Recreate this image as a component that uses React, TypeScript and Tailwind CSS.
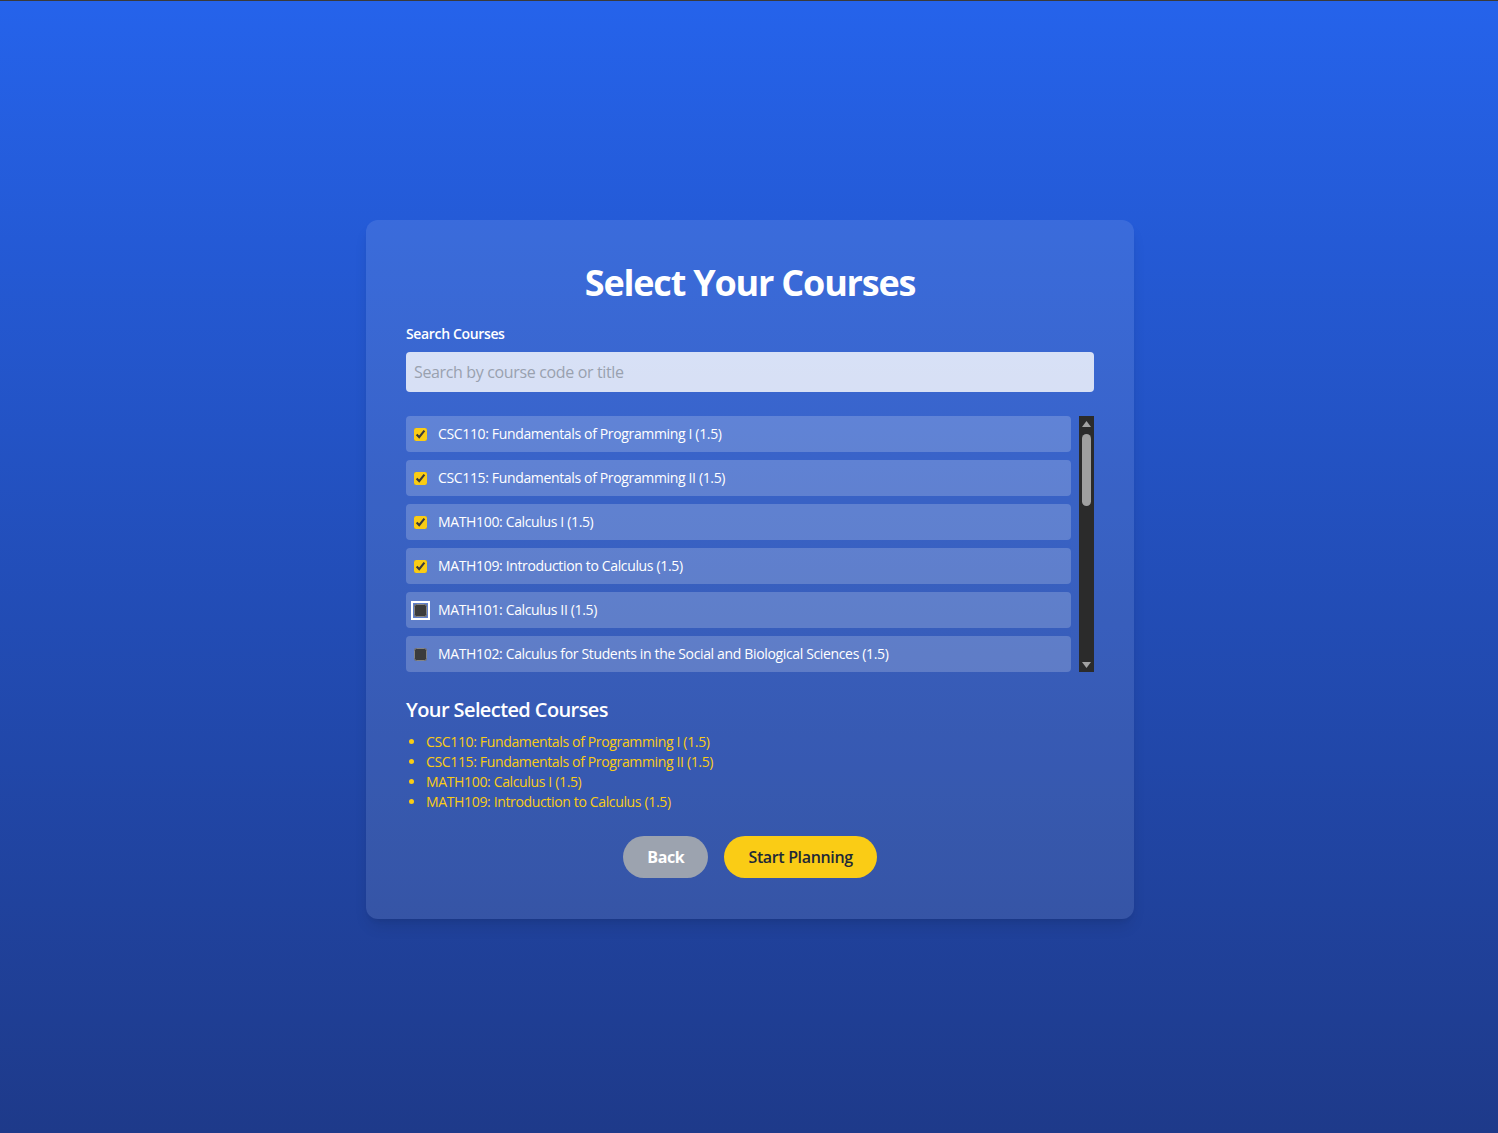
import React, { useState } from "react";

const COURSES = [
  { code: "CSC110", title: "Fundamentals of Programming I", units: "1.5" },
  { code: "CSC115", title: "Fundamentals of Programming II", units: "1.5" },
  { code: "MATH100", title: "Calculus I", units: "1.5" },
  { code: "MATH109", title: "Introduction to Calculus", units: "1.5" },
  { code: "MATH101", title: "Calculus II", units: "1.5" },
  { code: "MATH102", title: "Calculus for Students in the Social and Biological Sciences", units: "1.5" },
  { code: "MATH110", title: "Matrix Algebra for Engineers", units: "1.5" },
  { code: "MATH122", title: "Logic and Fundamentals", units: "1.5" },
  { code: "MATH200", title: "Calculus of Several Variables", units: "1.5" },
  { code: "MATH211", title: "Matrix Algebra I", units: "1.5" },
  { code: "CSC225", title: "Algorithms and Data Structures I", units: "1.5" },
  { code: "CSC226", title: "Algorithms and Data Structures II", units: "1.5" },
  { code: "CSC230", title: "Introduction to Computer Architecture", units: "1.5" },
  { code: "CSC320", title: "Foundations of Computer Science", units: "1.5" },
  { code: "CSC360", title: "Operating Systems", units: "1.5" },
  { code: "CSC370", title: "Database Systems", units: "1.5" },
  { code: "SENG265", title: "Software Development Methods", units: "1.5" },
  { code: "STAT260", title: "Introduction to Probability and Statistics I", units: "1.5" },
  { code: "ENGL135", title: "Academic Reading and Writing", units: "1.5" },
  { code: "PHYS110", title: "Introductory Physics I", units: "1.5" },
];

const label = (c: { code: string; title: string; units: string }) =>
  `${c.code}: ${c.title} (${c.units})`;

function Scrollbar() {
  return (
    <div className="w-[15px] shrink-0 bg-[#2b2b2b] flex flex-col items-center">
      <div className="h-[15px] w-full flex items-center justify-center">
        <svg width="9" height="6" viewBox="0 0 9 6">
          <polygon points="4.5,0 9,6 0,6" fill="#a3a3a3" />
        </svg>
      </div>
      <div className="mt-[3px] h-[72px] w-[9px] rounded-full bg-[#a0a0a0]" />
      <div className="flex-1" />
      <div className="h-[15px] w-full flex items-center justify-center">
        <svg width="9" height="6" viewBox="0 0 9 6">
          <polygon points="0,0 9,0 4.5,6" fill="#a3a3a3" />
        </svg>
      </div>
    </div>
  );
}

export default function App() {
  const [selected, setSelected] = useState<string[]>(["CSC110", "CSC115", "MATH100", "MATH109"]);
  const toggle = (code: string) =>
    setSelected((s) => (s.includes(code) ? s.filter((x) => x !== code) : [...s, code]));

  return (
    <div
      className="min-h-screen flex items-center justify-center bg-gradient-to-b from-[#2563eb] to-[#1e3a8a] border-t border-[#3a3a3a] tracking-[-0.35px]"
      style={{ fontFamily: '"Open Sans", "Noto Sans", sans-serif' }}
    >
      <div className="w-[768px] ml-[2px] mt-[5px] rounded-xl bg-white/10 p-10 pb-[41px] shadow-lg">
        <h1 className="text-center text-4xl leading-10 font-bold text-white mt-[3px] mb-[21px] tracking-[-1.2px]">
          Select Your Courses
        </h1>
        <label className="block text-sm font-semibold text-white mb-2">Search Courses</label>
        <input
          type="text"
          placeholder="Search by course code or title"
          className="w-full h-10 rounded bg-white/80 px-2 text-base text-gray-800 placeholder-gray-400 outline-none mb-6"
        />
        <div className="h-64 flex">
          <div className="flex-1 overflow-y-auto [scrollbar-width:none] scheme-dark pr-2 flex flex-col gap-2">
            {COURSES.map((c) => {
              const checked = selected.includes(c.code);
              const focused = c.code === "MATH101";
              return (
                <label
                  key={c.code}
                  className="flex items-center h-9 shrink-0 rounded bg-white/20 px-2 text-sm text-white cursor-pointer"
                >
                  <input
                    type="checkbox"
                    checked={checked}
                    onChange={() => toggle(c.code)}
                    className={`w-[13px] h-[13px] mr-[11px] accent-[#facc15] ${
                      focused ? "outline-2 outline-white outline-offset-1 rounded-sm" : ""
                    }`}
                  />
                  <span>{label(c)}</span>
                </label>
              );
            })}
          </div>
          <Scrollbar />
        </div>
        <h2 className="mt-6 mb-2 text-xl font-semibold text-white tracking-[-0.6px]">Your Selected Courses</h2>
        <ul className="list-disc pl-5 text-sm text-[#facc15] leading-5 marker:text-[#facc15]">
          {COURSES.filter((c) => selected.includes(c.code)).map((c) => (
            <li key={c.code}>{label(c)}</li>
          ))}
        </ul>
        <div className="mt-6 flex justify-center gap-4">
          <button className="h-[42px] px-6 rounded-full bg-[#9ca3af] text-white font-bold text-base">Back</button>
          <button className="h-[42px] px-6 rounded-full bg-[#facc15] text-[#1f2937] font-semibold text-base">
            Start Planning
          </button>
        </div>
      </div>
    </div>
  );
}
